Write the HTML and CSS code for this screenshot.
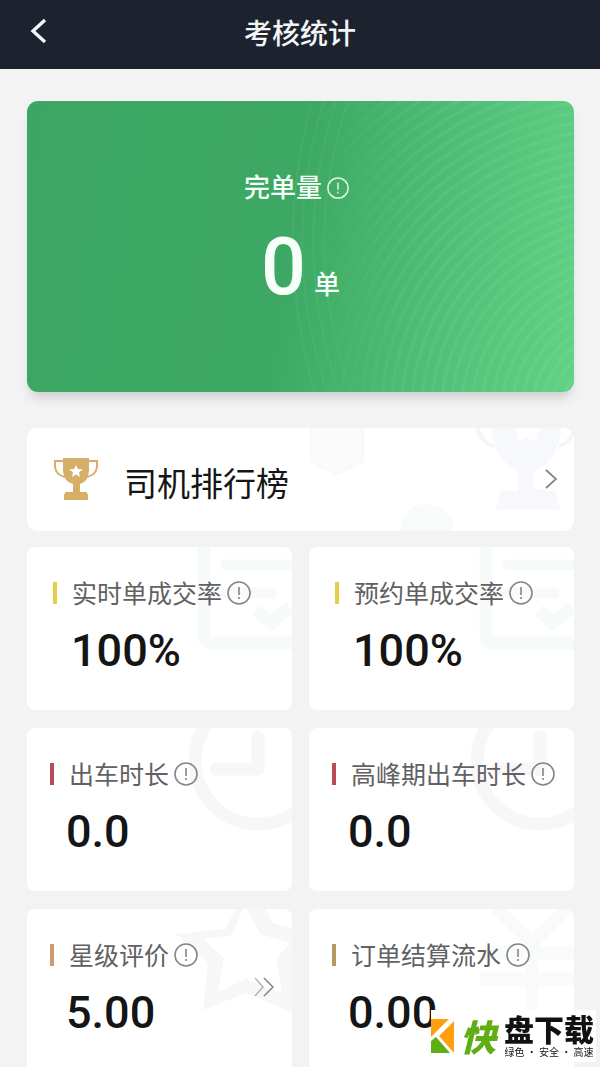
FILE: index.html
```html
<!DOCTYPE html>
<html lang="zh-CN">
<head>
<meta charset="utf-8">
<meta name="viewport" content="width=device-width, initial-scale=1">
<title>考核统计</title>
<link rel="stylesheet" href="styles.css">
</head>
<body>
<svg class="defs" width="0" height="0" aria-hidden="true">
  <symbol id="info" viewBox="0 0 24 24"><circle cx="12" cy="12" r="11" fill="none" stroke="currentColor" stroke-width="1.6"/><path d="M12 6v8M12 16v2" fill="none" stroke="currentColor" stroke-width="1.6"/></symbol>
  <symbol id="report" viewBox="0 0 96 104"><path d="M8-6V88Q8 96 16 96H100" fill="none" stroke="currentColor" stroke-width="13"/><path d="M30 18H92M30 46H76" fill="none" stroke="currentColor" stroke-width="11" stroke-linecap="round"/><path d="M61 63L75 76L94 60" fill="none" stroke="currentColor" stroke-width="13"/></symbol>
  <symbol id="clock" viewBox="0 0 106 104"><circle cx="72" cy="33" r="63" fill="none" stroke="currentColor" stroke-width="13"/><path d="M72 9V41H30" fill="none" stroke="currentColor" stroke-width="13" stroke-linecap="round" stroke-linejoin="round"/></symbol>
</svg>
<div class="app">
  <header class="topbar">
    <button class="back" type="button" aria-label="返回"><svg viewBox="0 0 18 26"><path d="M15 2L3 13L15 24" fill="none" stroke="currentColor" stroke-width="3.4"/></svg></button>
    <h1 class="title">考核统计</h1>
  </header>
  <main class="content">
    <section class="summary">
      <svg class="waves" viewBox="0 0 547 291" preserveAspectRatio="none" aria-hidden="true"><path d="M285 0Q245 145 288 291M297 0Q252 145 300 291M309 0Q262 145 312 291M321 0Q272 145 324 291" fill="none" stroke="#6bd08a" stroke-opacity=".16" stroke-width="2"/></svg>
      <div class="summary-label">完单量<svg class="info info-light"><use href="#info"/></svg></div>
      <div class="summary-value"><strong class="total">0</strong><span class="unit">单</span></div>
    </section>

    <a class="ranking" href="#ranking">
      <svg class="ranking-art" viewBox="0 0 270 103" aria-hidden="true">
        <path d="M7 0V33L33 46L59 33V0" fill="#fbfbfc" stroke="#f8f9f9" stroke-width="3"/>
        <path d="M97 103V96Q103 77 123 76Q143 79 149 94V103" fill="#f7fbfa"/>
        <path d="M187 0H257Q254 34 230 43V61H241V63H252L256 82H192L196 63H214V43Q190 32 187 0" fill="#f6f8fc"/>
        <path d="M210 0L214 5L212 14L223 10L234 14L232 5L238 0" fill="#fff"/>
        <path d="M173 0Q178 16 190 18M271 0Q266 16 255 18" fill="none" stroke="#f3f6f8" stroke-width="4"/>
      </svg>
      <svg class="trophy" viewBox="0 0 46 44" aria-hidden="true">
        <path d="M10 1H36V14Q35 25 27 27V35H34V37H35V43H11V37H12V35H20V27Q11 25 10 14Z" fill="#d7ae67"/>
        <path d="M10 4H2V10Q3 18 12 20M36 4H44V10Q43 18 34 20" fill="none" stroke="#d7ae67" stroke-width="2"/>
        <path d="M23 8L25 12L29.500 12.500L26 15.500L27 20L23 17.500L19 20L20 15.500L16.500 12.500L21 12Z" fill="#fff"/>
      </svg>
      <span class="ranking-name">司机排行榜</span>
      <svg class="chevron" viewBox="0 0 12 20" aria-hidden="true"><path d="M1 1L11 10L1 19" fill="none" stroke="currentColor" stroke-width="1.8"/></svg>
    </a>

    <section class="stats">
      <article class="stat yellow">
        <svg class="art art-report"><use href="#report"/></svg>
        <h2 class="name">实时单成交率<svg class="info"><use href="#info"/></svg></h2>
        <p class="value">100%</p>
      </article>
      <article class="stat yellow">
        <svg class="art art-report"><use href="#report"/></svg>
        <h2 class="name">预约单成交率<svg class="info"><use href="#info"/></svg></h2>
        <p class="value">100%</p>
      </article>
      <article class="stat red">
        <svg class="art art-clock"><use href="#clock"/></svg>
        <h2 class="name">出车时长<svg class="info"><use href="#info"/></svg></h2>
        <p class="value">0.0</p>
      </article>
      <article class="stat red">
        <svg class="art art-clock"><use href="#clock"/></svg>
        <h2 class="name">高峰期出车时长<svg class="info"><use href="#info"/></svg></h2>
        <p class="value">0.0</p>
      </article>
      <article class="stat orange">
        <svg class="art art-star" viewBox="0 0 116 104"><path fill-rule="evenodd" d="M0 25L49 20L60 0H90L96 14L118 20V104L70 84L27 101L32 54ZM27 30L48 49L42 83L70 70L106 85L100 50L114 34L84 25L71 0H67L56 26Z" fill="currentColor"/></svg>
        <h2 class="name">星级评价<svg class="info"><use href="#info"/></svg></h2>
        <p class="value">5.00</p>
        <svg class="more" viewBox="0 0 20 20" aria-hidden="true"><path d="M1 1L9 10L1 19" fill="none" stroke="#b5b5b5" stroke-width="1.500"/><path d="M10 1L19 10L10 19" fill="none" stroke="#858585" stroke-width="1.500"/></svg>
      </article>
      <article class="stat gold">
        <svg class="art art-yen" viewBox="0 0 96 104"><path d="M18-2L54 34L90-2M54 34V100M2 44H100M2 70H100" fill="none" stroke="currentColor" stroke-width="13"/></svg>
        <h2 class="name">订单结算流水<svg class="info"><use href="#info"/></svg></h2>
        <p class="value">0.00</p>
      </article>
    </section>
  </main>
</div>
<aside class="brand">
  <svg class="brand-mark" viewBox="0 0 24 34" aria-hidden="true"><path d="M0 0H18L0 18ZM23 2V34L8 17Z" fill="#ff9f0e"/><path d="M0 22L5 18L19 34H0Z" fill="#5fae14"/></svg>
  <span class="brand-lead">快</span>
  <span class="brand-text"><b class="brand-name">盘下载</b><small class="brand-tag">绿色 · 安全 · 高速</small></span>
</aside>
</body>
</html>
```
FILE: styles.css
```css
* { box-sizing: border-box; }
body {
  margin: 0;
  background: #f3f3f4;
  color: #151515;
  font-family: Roboto, "Noto Sans CJK SC", sans-serif;
}
.defs { position: absolute; }
.app { display: flex; flex-direction: column; height: 100vh; }

.topbar {
  flex: none;
  display: grid;
  grid-template-columns: 56px 1fr 56px;
  align-items: center;
  height: 69px;
  padding-bottom: 5px;
  background: #1c232f;
  color: #f4f5f6;
}
.back {
  display: flex;
  justify-content: flex-end;
  padding: 0 8px 2px 0;
  border: 0;
  background: none;
  color: inherit;
}
.back svg { width: 18px; height: 26px; }
.title { margin: 0; padding-top: 5px; font-size: 28px; line-height: 40px; font-weight: 500; text-align: center; }

.content { flex: 1; min-height: 0; padding: 32px 26px 0 27px; overflow-y: auto; scrollbar-width: none; }

.summary {
  position: relative;
  display: flex;
  flex-direction: column;
  align-items: center;
  height: 291px;
  padding: 69px 8px 0 0;
  border-radius: 11px;
  background: linear-gradient(100deg, #3da665 0%, #3da863 48%, #4fbc75 72%, #62d287 100%);
  box-shadow: 0 9px 12px -4px #c9cacc;
  color: #f6fff8;
}
.summary::before {
  content: "";
  position: absolute;
  inset: 0;
  border-radius: inherit;
  background: repeating-radial-gradient(circle at 110% 108%, transparent 0 5px, rgba(150, 240, 165, .12) 7px 8px, transparent 10px);
  mask-image: linear-gradient(90deg, transparent 50%, #000 75%);
}
.waves { position: absolute; inset: 0; width: 100%; height: 100%; }
.summary-label { position: relative; display: flex; align-items: center; gap: 5px; font-size: 26px; line-height: 36px; font-weight: 500; }
.summary-value { position: relative; display: flex; align-items: baseline; gap: 8px; padding: 1px 0 0 8px; }
.total { font-size: 79px; line-height: 120px; font-weight: 500; }
.unit { font-size: 26px; font-weight: 500; }
.info { flex: none; width: 24px; height: 24px; color: #858585; }
.info-light { width: 22px; height: 22px; color: #d8f8df; }

.ranking {
  position: relative;
  display: flex;
  align-items: center;
  height: 103px;
  margin-top: 36px;
  padding: 0 17px 2px 26px;
  border-radius: 10px;
  background: #fff;
  color: #151515;
  text-decoration: none;
  overflow: hidden;
}
.ranking-art { position: absolute; top: 0; right: 0; width: 270px; height: 103px; }
.trophy { width: 46px; height: 44px; }
.ranking-name { position: relative; flex: 1; margin-left: 25px; padding-top: 12px; font-size: 33px; line-height: 48px; }
.chevron { position: relative; width: 12px; height: 20px; color: #858585; }

.stats { display: grid; grid-template-columns: 1fr 1fr; gap: 18px 17px; margin-top: 16px; padding-bottom: 18px; }
.stat { position: relative; height: 163px; padding: 30px 0 0 23px; border-radius: 8px; background: #fff; overflow: hidden; }
.yellow { padding-left: 26px; }
.name { position: relative; display: flex; align-items: center; margin: 0; font-size: 25px; line-height: 36px; font-weight: 400; color: #616163; }
.name::before { content: ""; width: 4px; height: 22px; margin: 0 15px 4px 0; background: #b94c58; }
.name .info { margin: 0 0 4px 5px; }
.yellow .name::before { background: #e3cf48; }
.orange .name::before { background: #d29a6c; }
.gold .name::before { background: #b59a66; }
.value { position: relative; margin: 11px 0 0 16px; font-size: 45px; line-height: 54px; font-weight: 500; }
.yellow .value { margin-left: 18px; }
.art { position: absolute; top: 0; right: 0; height: 104px; }
.art-report { width: 96px; color: #f7fafa; }
.art-clock { width: 106px; color: #f7f7fa; }
.art-star { width: 116px; color: #f5f7f9; }
.art-yen { width: 96px; color: #f8fbfa; }
.more { position: absolute; top: 68px; right: 18px; width: 20px; height: 20px; }

.brand {
  position: fixed;
  right: 4px;
  bottom: 5px;
  display: flex;
  align-items: center;
  height: 52px;
  padding-right: 2px;
  background: #fff;
  font-family: "Noto Sans CJK SC", sans-serif;
}
.brand-mark { width: 24px; height: 34px; }
.brand-lead { margin-left: 5px; padding-bottom: 2px; font-size: 36px; line-height: 40px; font-weight: 900; font-style: italic; color: #5fae14; }
.brand-text { display: flex; flex-direction: column; gap: 2px; margin-left: 8px; color: #111; }
.brand-name { font-size: 30px; line-height: 30px; font-weight: 900; }
.brand-tag { font-size: 10px; line-height: 14px; white-space: nowrap; text-align: center; }
```
